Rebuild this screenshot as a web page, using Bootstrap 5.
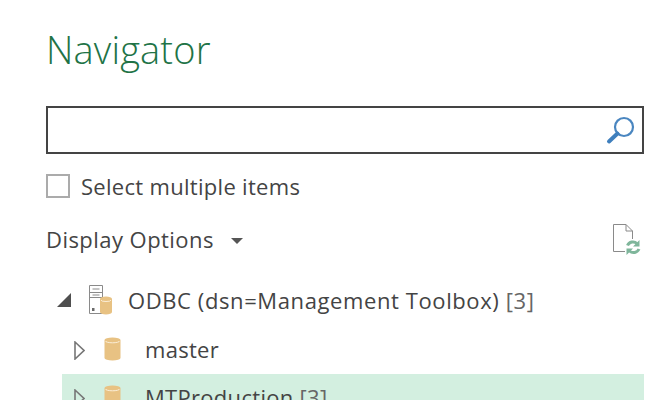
<!DOCTYPE html>
<html lang="en">
<head>
  <meta charset="UTF-8">
  <title>Navigator</title>
  <link href="https://cdn.jsdelivr.net/npm/bootstrap@5.3.0/dist/css/bootstrap.min.css" rel="stylesheet">
  <style>
    html, body { height: 400px; overflow: hidden; }
    body {
      background: #fff;
      color: #444;
      font-family: "Open Sans", "Noto Sans", sans-serif;
      font-size: 22px;
      letter-spacing: .3px;
      line-height: 30px;
    }
    .nav-pane { padding: 24px 20px 0 46px; }
    .nav-title {
      color: #217346;
      font-family: "Open Sans", sans-serif;
      font-size: 38px;
      font-weight: 300;
      letter-spacing: .15px;
      line-height: 50px;
      margin: 0 0 32px 0;
    }
    .search-box {
      height: 48px;
      border: 2px solid #444;
      padding-right: 6px;
    }
    .check-row { margin-top: 20px; height: 24px; gap: 11px; }
    .check-square { width: 24px; height: 24px; border: 2px solid #ababab; }
    .options-row { margin-top: 18px; height: 48px; }
    .options-label { letter-spacing: .45px; padding-bottom: 2px; }
    .caret-down {
      width: 0; height: 0; margin-left: 17px; margin-top: 2px;
      border-left: 6px solid transparent;
      border-right: 6px solid transparent;
      border-top: 6px solid #555;
    }
    .tree-pane { margin-top: 14px; }
    .tree-row { height: 48px; }
    .tree-row.is-top { padding-left: 11px; padding-bottom: 4px; letter-spacing: .6px; }
    .tree-row.is-child { padding-left: 12px; padding-bottom: 2px; margin-left: 16px; }
    .tree-row.is-selected { background: #d3efe0; }
    .tree-arrow { margin-top: 3px; }
    .server-icon { margin-left: 18px; margin-right: 15px; }
    .db-icon { margin-left: 19px; margin-right: 24px; }
    .row-count { color: #666; }
  </style>
</head>
<body>
  <div class="nav-pane">
    <h1 class="nav-title">Navigator</h1>

    <div class="search-box d-flex align-items-center justify-content-end">
      <svg width="30" height="30" viewBox="0 0 30 30">
        <circle cx="18" cy="12" r="9" fill="none" stroke="#4a86c0" stroke-width="2.2"/>
        <path d="M11.5 18.5 L3 26.5" stroke="#3f7fbd" stroke-width="4" stroke-linecap="round"/>
      </svg>
    </div>

    <div class="check-row d-flex align-items-center">
      <div class="check-square"></div>
      <span>Select multiple items</span>
    </div>

    <div class="options-row d-flex align-items-center justify-content-between">
      <div class="d-flex align-items-center">
        <span class="options-label">Display Options</span>
        <span class="caret-down"></span>
      </div>
      <svg width="32" height="32" viewBox="0 0 32 32">
        <path d="M1.5 .5 H14 L20.5 7 V15 M14 .5 V7 H20.5 M1.5 .5 V27.5 H13" fill="none" stroke="#8a8a8a" stroke-width="1"/>
        <path d="M15.5 21.5 A6 6 0 0 1 25 19.5 M27 25 A6 6 0 0 1 17.5 27" fill="none" stroke="#7fb69b" stroke-width="3"/>
        <path d="M27.5 16 V22.5 H21 Z M14.5 31 V24.5 H21 Z" fill="#7fb69b"/>
      </svg>
    </div>

    <div class="tree-pane">
      <div class="tree-row is-top d-flex align-items-center">
        <svg width="14" height="14" viewBox="0 0 14 14" class="flex-shrink-0">
          <path d="M14 0 V14 H0 Z" fill="#4f4f4f"/>
        </svg>
        <svg width="24" height="30" viewBox="0 0 24 30" class="flex-shrink-0 server-icon">
          <path d="M.5 .5 H13.5 V28.5 H.5 Z M.5 7.5 H13.5 M.5 12.5 H13.5 M3.5 4 H10.5 M3.5 10 H10.5" fill="none" stroke="#8a8a8a"/>
          <rect x="3" y="23" width="2.5" height="3" fill="#6a6a6a"/>
          <path d="M11 14 A6 2.5 0 0 1 23 14 V27 A6 2.5 0 0 1 11 27 Z" fill="#e8c283"/>
          <path d="M12 15 A5 1.5 0 0 0 22 15" fill="none" stroke="#fbeed7"/>
        </svg>
        <span>ODBC (dsn=Management Toolbox) <span class="row-count">[3]</span></span>
      </div>

      <div class="tree-row is-child d-flex align-items-center">
        <svg width="11" height="19" viewBox="0 0 11 19" class="flex-shrink-0 tree-arrow">
          <path d="M1 1 L10 9.5 L1 18 Z" fill="#fff" stroke="#777" stroke-width="1.6"/>
        </svg>
        <svg width="17" height="24" viewBox="0 0 17 24" class="flex-shrink-0 db-icon">
          <path d="M.5 3 A8 2.6 0 0 1 16.5 3 V21 A8 2.6 0 0 1 .5 21 Z" fill="#e8c283"/>
          <path d="M1.5 4 A7 1.8 0 0 0 15.5 4" fill="none" stroke="#fbeed7"/>
        </svg>
        <span>master</span>
      </div>

      <div class="tree-row is-child is-selected d-flex align-items-center">
        <svg width="11" height="19" viewBox="0 0 11 19" class="flex-shrink-0 tree-arrow">
          <path d="M1 1 L10 9.5 L1 18 Z" fill="#d3efe0" stroke="#777" stroke-width="1.6"/>
        </svg>
        <svg width="17" height="24" viewBox="0 0 17 24" class="flex-shrink-0 db-icon">
          <path d="M.5 3 A8 2.6 0 0 1 16.5 3 V21 A8 2.6 0 0 1 .5 21 Z" fill="#e8c283"/>
          <path d="M1.5 4 A7 1.8 0 0 0 15.5 4" fill="none" stroke="#fbeed7"/>
        </svg>
        <span>MTProduction <span class="row-count">[3]</span></span>
      </div>
    </div>
  </div>
  <script src="https://cdn.jsdelivr.net/npm/bootstrap@5.3.0/dist/js/bootstrap.bundle.min.js"></script>
</body>
</html>
